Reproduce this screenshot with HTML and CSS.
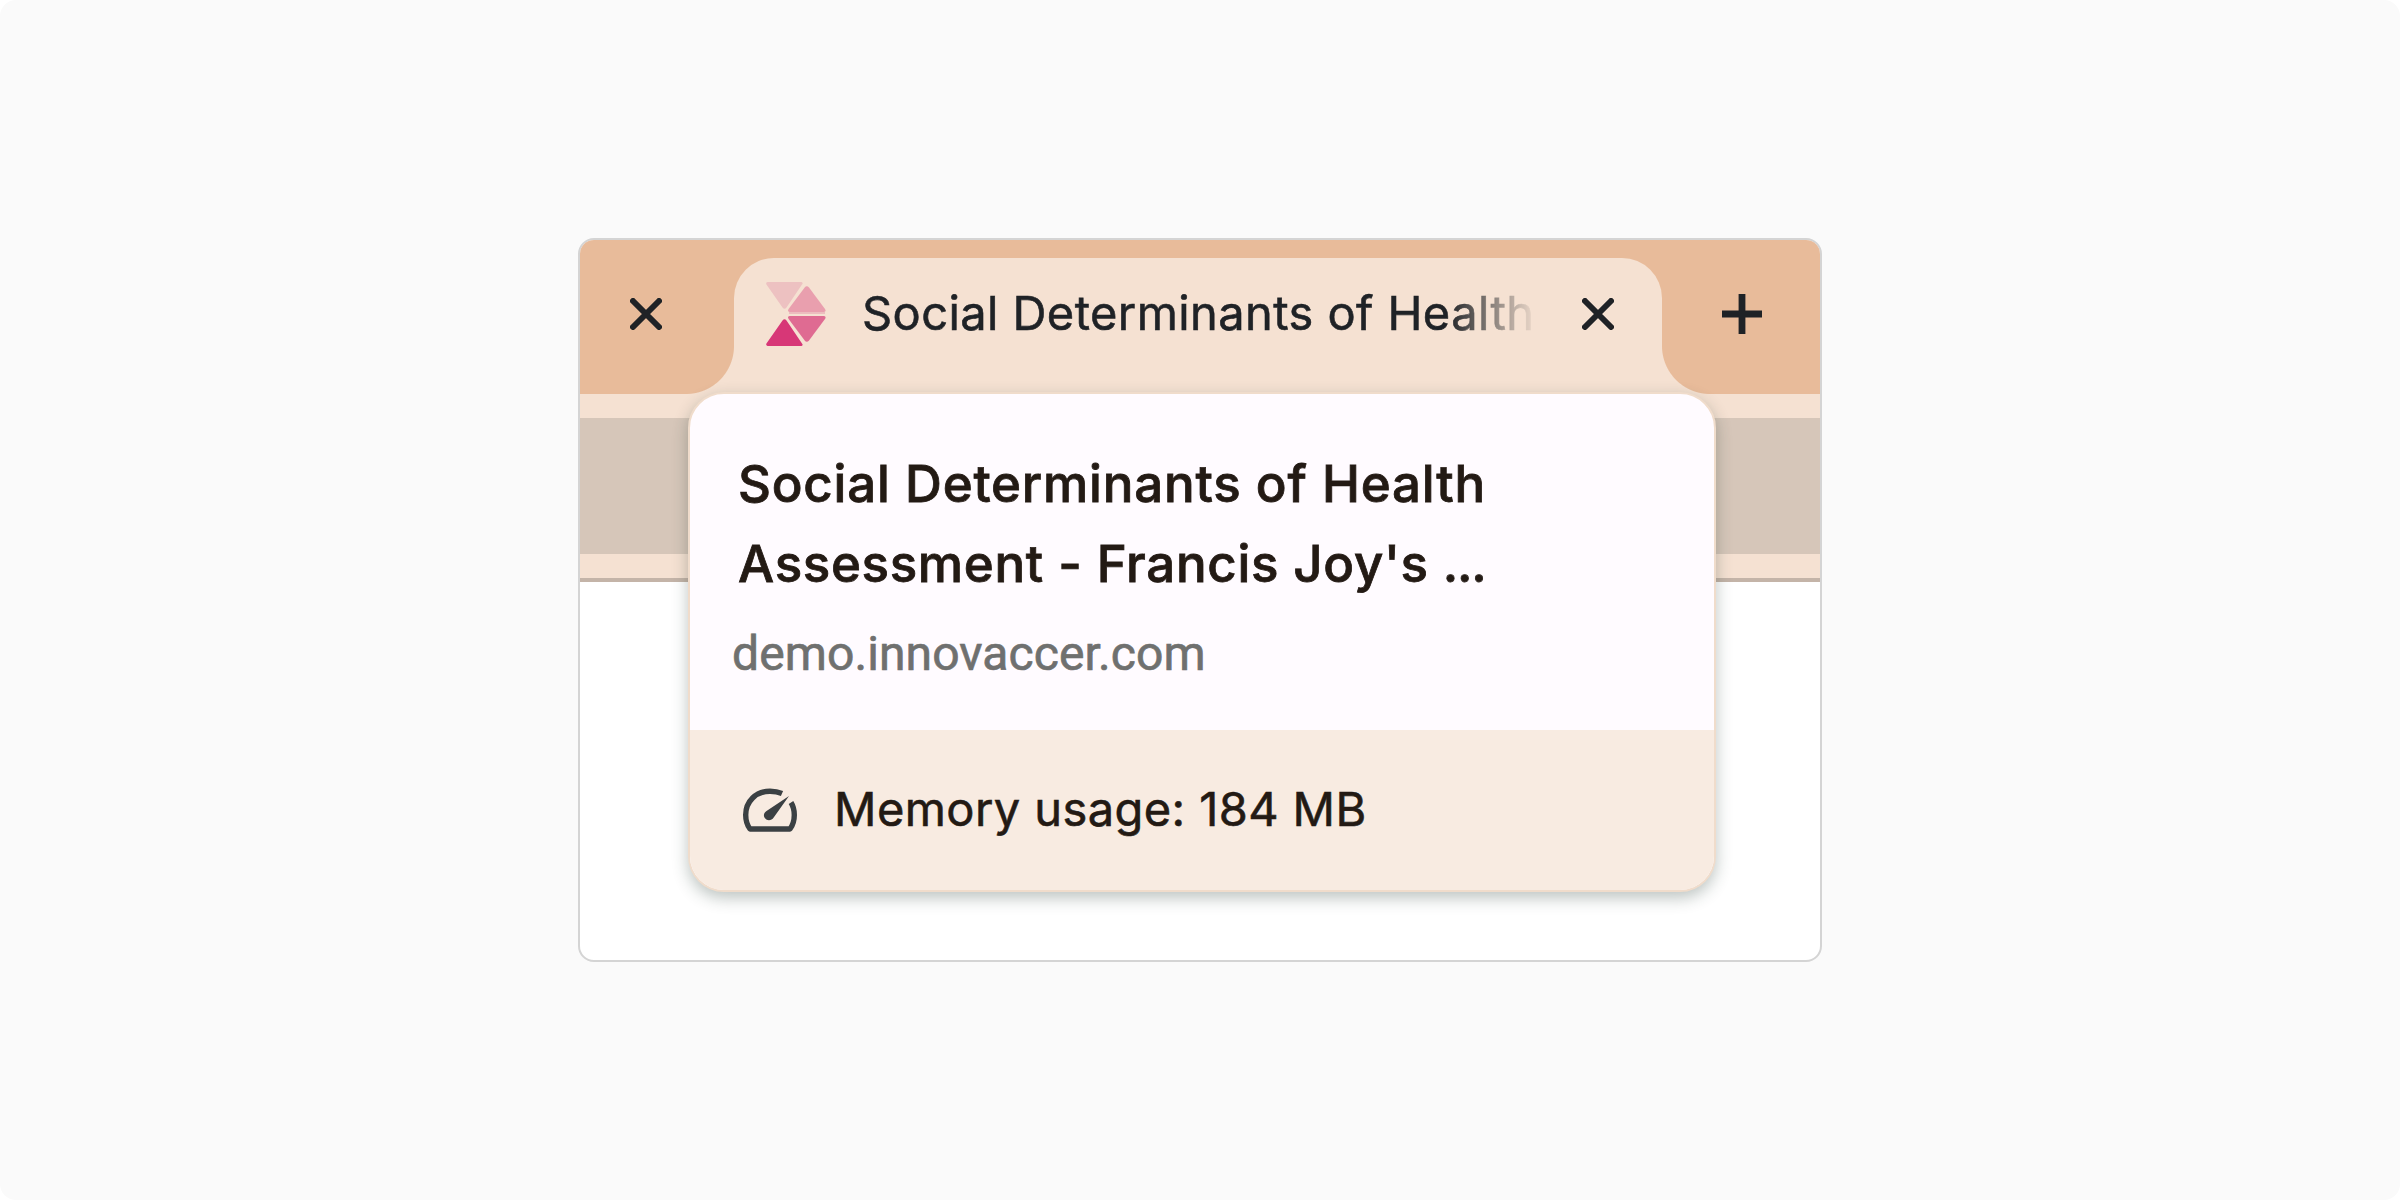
FILE: index.html
```html
<!DOCTYPE html>
<html lang="en">
<head>
<meta charset="utf-8">
<title>Tab memory usage</title>
<link rel="stylesheet" href="styles.css">
</head>
<body>
<main class="stage">
  <section class="browser">
    <div class="tab-strip">
      <div class="previous-tab">
        <svg class="close" viewBox="0 0 32 32"><path d="M3 3 29 29M29 3 3 29"/></svg>
      </div>
      <div class="active-tab">
        <svg class="logo" viewBox="0 0 60 64">
          <path fill="#edc1c1" d="M1.5 0H35.5Q37.5 .8 36 2.6L20.5 25.5Q18.5 28 16.5 25.5L.8 3Q-.8 .8 1.5 0Z"/>
          <path fill="#e99fae" d="M38.7 5.5Q40.7 3 43 5.5L59 27Q60.6 29.5 58 30H23.5Q21 29.5 22.6 27Z"/>
          <path fill="#edbdbf" d="M23 30H59V32H23Z"/>
          <path fill="#df6b92" d="M23.5 34H58Q60.6 34.5 59 37L43 58.5Q40.7 61 38.7 58.5L22.6 37Q21 34.5 23.5 34Z"/>
          <path fill="#d73777" d="M16.5 38.5Q18.5 36 20.5 38.5L36 61.4Q37.5 63.2 35.5 64H1.5Q-.8 63.2 .8 61Z"/>
        </svg>
        <span class="tab-title">Social Determinants of Health</span>
        <svg class="close" viewBox="0 0 32 32"><path d="M3 3 29 29M29 3 3 29"/></svg>
      </div>
      <div class="new-tab">
        <svg class="plus" viewBox="0 0 40 40"><path d="M20 0V40M0 20H40"/></svg>
      </div>
    </div>
    <div class="toolbar"><div class="address"></div></div>
    <aside class="hover-card">
      <div class="summary">
        <h1 class="title">Social Determinants of Health<br><span class="second-line">Assessment - Francis Joy's <span class="dots">...</span></span></h1>
        <p class="domain">demo.innovaccer.com</p>
      </div>
      <div class="memory">
        <svg class="gauge" viewBox="0 0 56 44">
          <path class="dial" d="M40 5.500C36 3.700 32 3.200 28 3.200C14 3.200 3.700 13.500 3.700 27C3.700 32 5 37 8 41H48C51 37 52.300 32 52.300 27C52.300 22 51.200 18 49 14.500"/>
          <path class="needle" d="M47 8 31.700 29.500C29.500 33 25 33 23 30.300C21 27.500 22 24.500 24.500 23Z"/>
        </svg>
        <span class="usage">Memory usage: 184 MB</span>
      </div>
    </aside>
  </section>
</main>
</body>
</html>
```
FILE: styles.css
```css
* { box-sizing: border-box; }

body {
  margin: 0;
  background: #fff;
  font-family: Inter, "Liberation Sans", sans-serif;
}

.stage {
  display: flex;
  align-items: center;
  justify-content: center;
  height: 1200px;
  border-radius: 16px;
  background: #fafafa;
}

.browser {
  position: relative;
  width: 1244px;
  height: 724px;
  border: 2px solid #d4d4d4;
  border-radius: 16px;
  background: #fff;
}

.tab-strip {
  display: flex;
  align-items: flex-end;
  height: 154px;
  border-radius: 14px 14px 0 0;
  background: #e8bb9a;
  color: #1f2226;
}

.previous-tab,
.new-tab {
  display: flex;
  align-items: center;
  height: 136px;
  padding-bottom: 24px;
}

.previous-tab { width: 154px; padding-left: 50px; }
.new-tab { flex: 1; padding-left: 60px; }

.active-tab {
  position: relative;
  display: flex;
  align-items: center;
  width: 928px;
  height: 136px;
  padding: 0 48px 24px 32px;
  border-radius: 40px 40px 0 0;
  background: #f5e1d2;
}

.active-tab::before,
.active-tab::after {
  content: "";
  position: absolute;
  bottom: 0;
  width: 48px;
  height: 48px;
}

.active-tab::before {
  right: 100%;
  background: radial-gradient(circle at 0 0, transparent 47.5px, #f5e1d2 48.5px);
}

.active-tab::after {
  left: 100%;
  background: radial-gradient(circle at 100% 0, transparent 47.5px, #f5e1d2 48.5px);
}

svg { display: block; flex: none; }

.close { width: 32px; height: 32px; }
.plus { width: 40px; height: 40px; }

.close path,
.plus path {
  fill: none;
  stroke: #1f2226;
}

.close path { stroke-width: 6; stroke-linecap: round; }
.plus path { stroke-width: 6.8; }

.logo { width: 60px; height: 64px; }

.tab-title {
  flex: 1;
  margin: 0 43px 2px 36px;
  font-size: 47px;
  letter-spacing: .42px;
  line-height: 64px;
  white-space: nowrap;
  -webkit-text-stroke: .6px currentColor;
  -webkit-mask-image: linear-gradient(90deg, #000 585px, transparent 676px);
  mask-image: linear-gradient(90deg, #000 585px, transparent 676px);
}

.toolbar {
  height: 188px;
  padding: 24px 0;
  border-bottom: 4px solid #c4b4a8;
  background: #f5e1d2;
}

.address { height: 136px; background: #d6c6b9; }

.hover-card {
  position: absolute;
  top: 152px;
  left: 108px;
  display: flex;
  flex-direction: column;
  width: 1028px;
  height: 500px;
  overflow: hidden;
  border: 2px solid #f0dccb;
  border-radius: 36px;
  background: #fffbff;
  box-shadow: 0 6px 16px rgba(35, 60, 50, .3);
  color: #231a14;
}

.summary { height: 336px; padding: 50px 46px 0; }

.title {
  margin: 0;
  padding-left: 2px;
  font-size: 51px;
  font-weight: 500;
  letter-spacing: .8px;
  line-height: 80px;
  white-space: nowrap;
  -webkit-text-stroke: .8px currentColor;
}

.second-line { letter-spacing: .68px; }
.dots { letter-spacing: -1.2px; }

.domain {
  margin: 18px 0 0 -4px;
  color: #6f706f;
  font-family: Roboto, sans-serif;
  font-size: 48px;
  letter-spacing: .1px;
  line-height: 64px;
  -webkit-text-stroke: .7px currentColor;
}

.memory {
  display: flex;
  flex: 1;
  align-items: center;
  gap: 36px;
  padding-left: 52px;
  background: #f8ebe1;
  font-size: 47px;
}

.usage {
  margin-bottom: 4px;
  letter-spacing: .42px;
  -webkit-text-stroke: .6px currentColor;
}

.dial { fill: none; stroke: #3b4043; stroke-width: 5.4; stroke-linejoin: round; }
.needle { fill: #3b4043; }
.gauge { width: 56px; height: 44px; }
```
